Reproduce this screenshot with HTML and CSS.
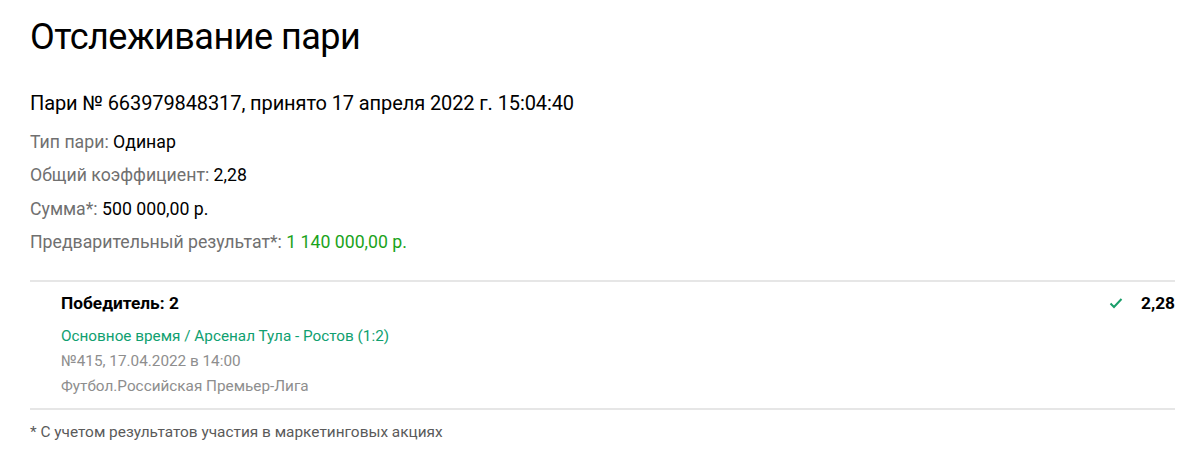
FILE: index.html
```html
<!DOCTYPE html>
<html lang="ru">
<head>
<meta charset="utf-8">
<link rel="stylesheet" href="styles.css">
</head>
<body>
<main class="page">
  <h1 class="title">Отслеживание пари</h1>
  <div class="bet-head">Пари № 663979848317, принято 17 апреля 2022 г. 15:04:40</div>
  <div class="info">
    <div class="row"><span class="label">Тип пари:</span> <span class="val">Одинар</span></div>
    <div class="row"><span class="label">Общий коэффициент:</span> <span class="val">2,28</span></div>
    <div class="row"><span class="label">Сумма*:</span> <span class="val">500 000,00 р.</span></div>
    <div class="row"><span class="label">Предварительный результат*:</span> <span class="val green">1 140 000,00 р.</span></div>
  </div>
  <section class="event">
    <div class="event-main">
      <div class="outcome">Победитель: 2</div>
      <div class="match">Основное время / Арсенал Тула - Ростов (1:2)</div>
      <div class="meta">№415, 17.04.2022 в 14:00</div>
      <div class="meta">Футбол.Российская Премьер-Лига</div>
    </div>
    <div class="event-odds">
      <svg class="check" width="14" height="12" viewBox="0 0 14 12"><path d="M1.5 6.5 L5 10 L12.5 2" fill="none" stroke="#1a9e6a" stroke-width="2"/></svg>
      <span class="odd">2,28</span>
    </div>
  </section>
  <div class="note">* С учетом результатов участия в маркетинговых акциях</div>
</main>
</body>
</html>
```
FILE: styles.css
```css
* { box-sizing: border-box; }
body {
  margin: 0;
  background: #fff;
  font-family: Roboto, "Noto Sans", Arial, sans-serif;
  color: #000;
}
.page {
  padding: 13px 25px 0 30px;
}
.title {
  margin: 0;
  font-weight: 400;
  font-size: 36px;
  line-height: 48px;
  letter-spacing: -0.5px;
}
.bet-head {
  margin-top: 30px;
  font-size: 20px;
  line-height: 24px;
  letter-spacing: -0.1px;
}
.info {
  margin-top: 11px;
}
.row {
  font-size: 17.7px;
  line-height: 33.3px;
}
.label { color: #707070; }
.val { color: #000; }
.green { color: #1ba31b; }
.event {
  margin-top: 21px;
  border-top: 2px solid #e6e6e6;
  border-bottom: 2px solid #e6e6e6;
  display: flex;
  justify-content: space-between;
  padding: 10px 0 9px 31px;
}
.outcome {
  font-weight: 700;
  font-size: 17.3px;
  line-height: 22px;
}
.match {
  margin-top: 10px;
  color: #0fa070;
  font-size: 15.3px;
  line-height: 25px;
}
.meta {
  color: #8e8e8e;
  font-size: 15.3px;
  line-height: 25px;
}
.event-odds {
  display: flex;
  align-items: center;
  gap: 18px;
  height: 22px;
}
.odd {
  font-weight: 700;
  font-size: 17.3px;
}
.note {
  margin-top: 13px;
  font-size: 15.4px;
  color: #5a5a5a;
}
```
